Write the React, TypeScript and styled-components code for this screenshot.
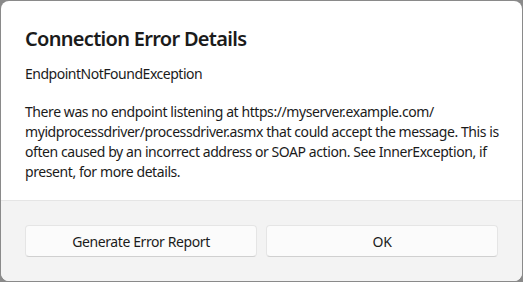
import React from "react";
import styled, { createGlobalStyle } from "styled-components";

const GlobalStyle = createGlobalStyle`
  html, body {
    margin: 0;
    padding: 0;
    background: #8a8a8a;
  }
  body {
    font-family: "Noto Sans", "Open Sans", sans-serif;
    color: #1b1b1b;
  }
  * {
    box-sizing: border-box;
  }
`;

const Backdrop = styled.div`
  width: 523px;
  height: 282px;
  padding: 1px;
  background: #8a8a8a;
`;

const Dialog = styled.div`
  width: 521px;
  height: 280px;
  display: flex;
  flex-direction: column;
  background: #ffffff;
  border-radius: 8px;
  overflow: hidden;
`;

const Content = styled.div`
  flex: 1;
  padding: 24px 24px 0 24px;
`;

const Title = styled.h1`
  margin: 0;
  font-size: 20px;
  line-height: 28px;
  font-weight: 600;
  letter-spacing: -0.7px;
`;

const Subtitle = styled.div`
  margin-top: 11px;
  font-size: 14px;
  line-height: 20px;
  letter-spacing: -0.48px;
`;

const Message = styled.p`
  margin: 18px 0 0 0;
  font-size: 14px;
  line-height: 20px;
  letter-spacing: -0.42px;
  white-space: nowrap;
`;

const Footer = styled.div`
  height: 81px;
  display: grid;
  grid-template-columns: 1fr 1fr;
  gap: 9px;
  align-items: center;
  padding: 0 24px;
  background: #f3f3f3;
  border-top: 1px solid #e5e5e5;
`;

const Button = styled.button`
  height: 32px;
  border: 1px solid #e5e5e5;
  border-bottom-color: #d0d0d0;
  border-radius: 4px;
  background: #fbfbfb;
  font-family: inherit;
  font-size: 14px;
  letter-spacing: -0.4px;
  color: #1b1b1b;
  cursor: pointer;
`;

const lines = [
  "There was no endpoint listening at https://myserver.example.com/",
  "myidprocessdriver/processdriver.asmx that could accept the message. This is",
  "often caused by an incorrect address or SOAP action. See InnerException, if",
  "present, for more details.",
];

export default function App() {
  return (
    <Backdrop>
      <GlobalStyle />
      <Dialog>
        <Content>
          <Title>Connection Error Details</Title>
          <Subtitle>EndpointNotFoundException</Subtitle>
          <Message>
            {lines.map((line, i) => (
              <React.Fragment key={i}>
                {line}
                {i < lines.length - 1 && <br />}
              </React.Fragment>
            ))}
          </Message>
        </Content>
        <Footer>
          <Button>Generate Error Report</Button>
          <Button>OK</Button>
        </Footer>
      </Dialog>
    </Backdrop>
  );
}
